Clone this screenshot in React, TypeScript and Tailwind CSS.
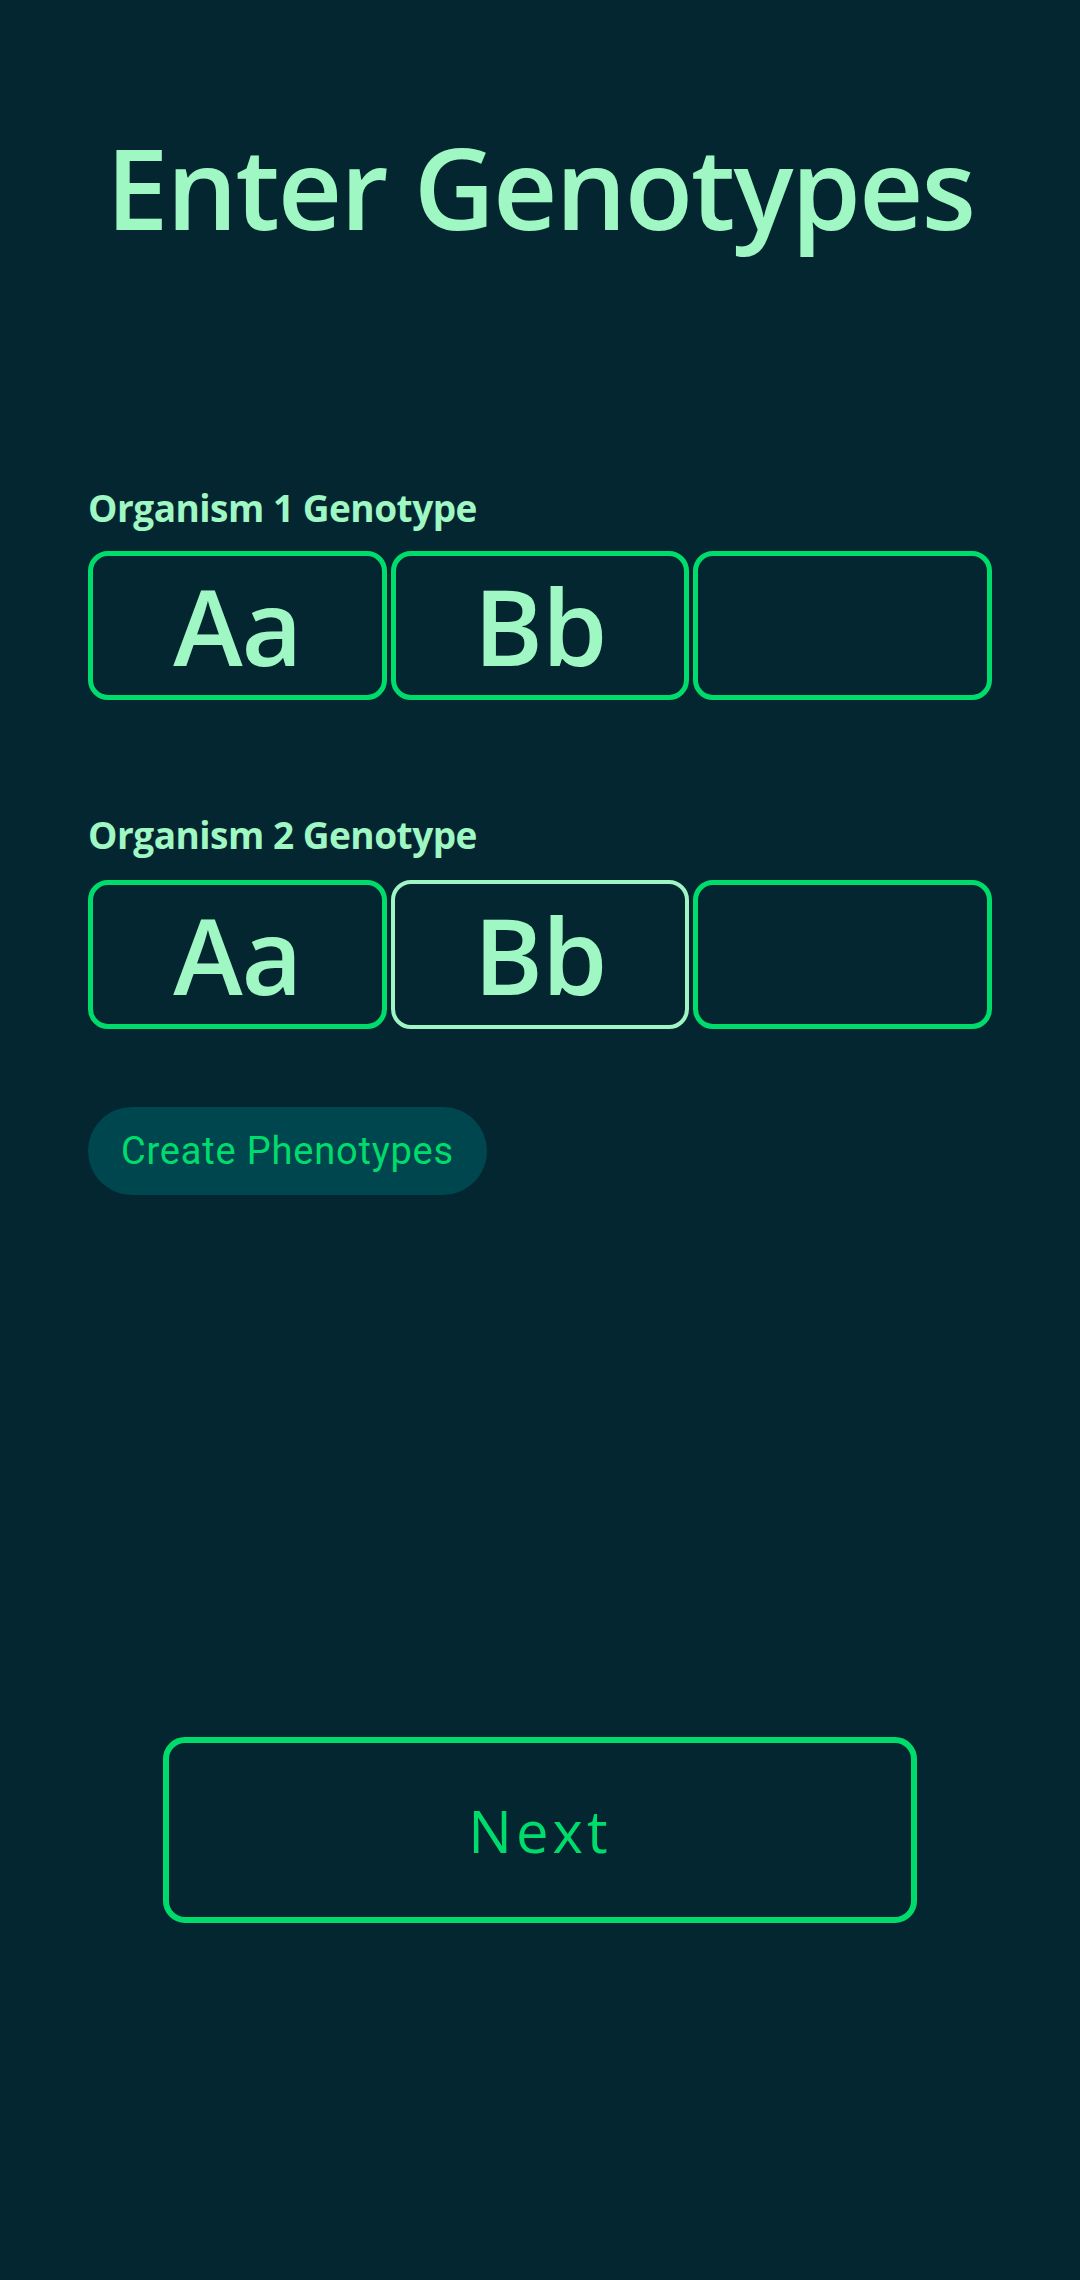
const genes1 = ['Aa', 'Bb', '']
const genes2 = ['Aa', 'Bb', '']

const GeneBox = ({ value, focused }: { value: string; focused?: boolean }) => (
  <div
    className={
      focused
        ? 'h-[149px] rounded-[20px] border-[4px] border-[#9ff5c3] flex items-center justify-center'
        : 'h-[149px] rounded-[20px] border-[5px] border-[#00dc6b] flex items-center justify-center'
    }
  >
    <span className="text-[105px] leading-none font-semibold text-[#9ff7c3] tracking-[-1px]">{value}</span>
  </div>
)

export default function App() {
  return (
    <div className="min-h-[2280px] w-full bg-[#032631] px-[88px] pt-[131px] font-['Open_Sans','Noto_Sans',sans-serif]">
      {/* title */}
      <h1 className="text-center text-[112px] leading-none font-semibold tracking-[-2px] text-[#9ff7c3]">
        Enter Genotypes
      </h1>

      {/* organism 1 */}
      <p className="mt-[246px] text-[37px] leading-none font-bold text-[#9ff7c3] tracking-[-0.5px]">
        Organism 1 Genotype
      </p>
      <div className="mt-[25px] grid grid-cols-3 gap-[4px]">
        {genes1.map((g, i) => (
          <GeneBox key={i} value={g} />
        ))}
      </div>

      {/* organism 2 */}
      <p className="mt-[116px] text-[37px] leading-none font-bold text-[#9ff7c3] tracking-[-0.5px]">
        Organism 2 Genotype
      </p>
      <div className="mt-[27px] grid grid-cols-3 gap-[4px]">
        {genes2.map((g, i) => (
          <GeneBox key={i} value={g} focused={i === 1} />
        ))}
      </div>

      <button className="mt-[78px] h-[88px] rounded-full bg-[#00464f] px-[33px] font-['Roboto',sans-serif] text-[38px] tracking-[0.8px] text-[#00dc6b]">
        Create Phenotypes
      </button>

      <div className="mt-[542px] flex justify-center">
        <button className="h-[186px] w-[754px] rounded-[22px] border-[6px] border-[#00dc6b] text-[58px] tracking-[4px] text-[#00dc6b]">
          Next
        </button>
      </div>
    </div>
  )
}
